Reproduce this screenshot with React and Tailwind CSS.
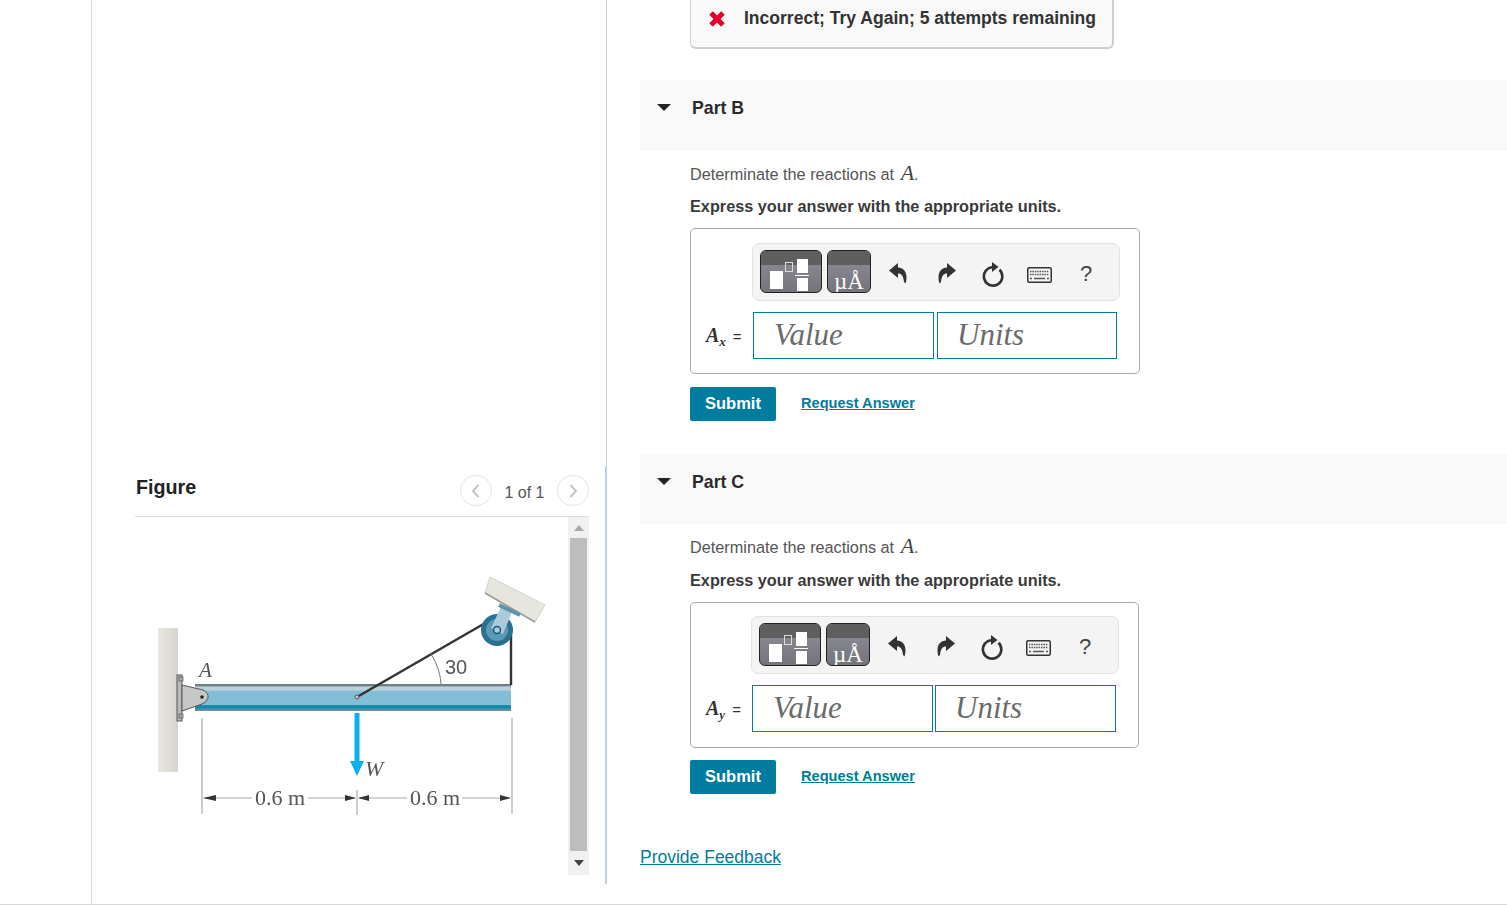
const SANS = "font-['Liberation_Sans',Arial,sans-serif]";

function Tri({ className = "" }) {
  return (
    <svg width="14" height="7" viewBox="0 0 14 7" className={className}>
      <path d="M0 0H14L7 7Z" fill="#222" />
    </svg>
  );
}

function TemplateBtn() {
  return (
    <div className="relative mt-[-1px] w-[62px] h-[43px] rounded-[6px] border border-[#222] overflow-hidden bg-gradient-to-b from-[#90909a] to-[#74747b] shrink-0">
      <div className="h-[14px] bg-[#5f5f5f]" />
      <div className="absolute left-[9px] top-[20px] w-[13px] h-[18px] bg-white" />
      <div className="absolute left-[24px] top-[11px] w-[8px] h-[10px] border border-[#ddd]" />
      <div className="absolute left-[36px] top-[8px] w-[11px] h-[14px] bg-white" />
      <div className="absolute left-[34px] top-[24px] w-[14px] h-[1px] bg-white" />
      <div className="absolute left-[36px] top-[27px] w-[11px] h-[13px] bg-white" />
    </div>
  );
}

function UnitBtn() {
  return (
    <div className="relative mt-[-1px] w-[44px] h-[43px] rounded-[6px] border border-[#222] overflow-hidden bg-gradient-to-b from-[#90909a] to-[#74747b] shrink-0 ml-[5px]">
      <div className="h-[14px] bg-[#5f5f5f]" />
      <span className="absolute left-[6px] bottom-[-4px] text-[23px] leading-[28px] text-white font-['Liberation_Serif',serif]">µÅ</span>
    </div>
  );
}

function Arrow({ flip }) {
  return (
    <svg width="18" height="22" viewBox="0 0 18 22" className={flip ? "-scale-x-100" : ""}>
      <path d="M9 1 L0 8.5 L9 16 L9 11.5 C12.5 11.5 14.5 14 15 20 L16.5 21.5 C19.5 12 15.5 5.5 9 5.5 Z" fill="#333" />
    </svg>
  );
}

function Reload() {
  return (
    <svg width="22" height="25" viewBox="0 0 22 25">
      <path d="M11 5.2 A9.2 9.2 0 1 0 17.5 7.8" fill="none" stroke="#333" strokeWidth="2.6" />
      <path d="M10 0 L16.5 5 L10 10 Z" fill="#333" />
    </svg>
  );
}

function Keyboard() {
  return (
    <svg width="25" height="16" viewBox="0 0 25 16">
      <rect x="0.75" y="0.75" width="23.5" height="14.5" rx="1.5" fill="#f4f4f4" stroke="#333" strokeWidth="1.5" />
      <path d="M3 4.5H22M3 7.5H22" stroke="#555" strokeWidth="1.6" strokeDasharray="1.5 0.9" />
      <path d="M3 11.5H5M7 11.5H18M20 11.5H22" stroke="#555" strokeWidth="1.6" />
    </svg>
  );
}

function Part({ title, sub, boxW, gap, toolbarLeft, inputW2, mt, headH, expressMt, toolbarTop, inputTop, submitMt }) {
  return (
    <section className={mt}>
      <div className="bg-[#f9f9f9] flex items-center pb-[14px] pl-[17px]" style={{ height: headH }}>
        <Tri className="mt-[-2px]" />
        <h3 className={`ml-[21px] text-[17.7px] font-bold text-[#2b2b2b] ${SANS}`}>{title}</h3>
      </div>
      <div className="pl-[50px]">
        <p className={`mt-[11px] h-[22px] leading-[22px] text-[16.25px] text-[#555] ${SANS}`}>
          Determinate the reactions at <i className="ml-[2px] font-['Liberation_Serif',serif] text-[22px] text-[#444]">A</i>.
        </p>
        <p className={`h-[22px] leading-[22px] text-[16.25px] font-bold text-[#3a3a3a] ${SANS}`} style={{ marginTop: expressMt }}>Express your answer with the appropriate units.</p>
        <div className="mt-[11px] h-[146px] border border-[#aaa] rounded-[5px] relative" style={{ width: boxW }}>
          <div className="absolute h-[58px] w-[368px] bg-[#f4f4f4] border border-[#e2e2e2] rounded-[7px] flex items-center pl-[7px]" style={{ left: toolbarLeft, top: toolbarTop }}>
            <TemplateBtn />
            <UnitBtn />
            <div className="ml-[18px] mt-[2px]"><Arrow /></div>
            <div className="ml-[31px] mt-[2px]"><Arrow flip /></div>
            <div className="ml-[26px] mt-[4px]"><Reload /></div>
            <div className="ml-[23px] mt-[6px]"><Keyboard /></div>
            <span className={`ml-[28px] mt-[2px] text-[22px] text-[#444] ${SANS}`}>?</span>
          </div>
          <div className="absolute left-[15px] flex items-center h-[47px]" style={{ top: inputTop }}>
            <span className={`w-[48px] pb-[2px] whitespace-nowrap text-[#333] text-[15px] ${SANS}`} style={{ marginRight: toolbarLeft - 62 }}>
              <i className="font-['Liberation_Serif',serif] text-[20px] font-bold text-[#333]">A</i>
              <i className="font-['Liberation_Serif',serif] text-[13px] font-bold relative top-[4px]">{sub}</i>
              <span className="ml-[7px]">=</span>
            </span>
            <div className="w-[181px] h-[47px] border border-[#007c9e] pl-[20px] flex items-center">
              <span className="font-['Liberation_Serif',serif] italic text-[31px] text-[#6b6b6b]">Value</span>
            </div>
            <div className="h-[47px] border border-[#007c9e] pl-[19px] flex items-center" style={{ marginLeft: gap, width: inputW2 }}>
              <span className="font-['Liberation_Serif',serif] italic text-[31px] text-[#6b6b6b]">Units</span>
            </div>
          </div>
        </div>
        <div className="flex items-center h-[34px]" style={{ marginTop: submitMt }}>
          <button className={`w-[86px] h-[34px] pb-[2px] bg-[#007c9e] rounded-[2px] text-white text-[16.5px] font-bold ${SANS}`}>Submit</button>
          <a className={`ml-[25px] text-[14.6px] font-bold underline text-[#007c9e] ${SANS}`}>Request Answer</a>
        </div>
      </div>
    </section>
  );
}

function Figure() {
  return (
    <svg width="433" height="358" viewBox="135 517 433 358" className="block blur-[0.4px]">
      <defs>
        <linearGradient id="beam" x1="0" y1="0" x2="0" y2="1">
          <stop offset="0" stopColor="#6f7f86" />
          <stop offset="0.08" stopColor="#6f7f86" />
          <stop offset="0.1" stopColor="#b9d2dc" />
          <stop offset="0.22" stopColor="#b9d2dc" />
          <stop offset="0.28" stopColor="#84bdd6" />
          <stop offset="0.76" stopColor="#84bdd6" />
          <stop offset="0.8" stopColor="#0e8cab" />
          <stop offset="0.9" stopColor="#0e8cab" />
          <stop offset="0.92" stopColor="#64909f" />
          <stop offset="1" stopColor="#64909f" />
        </linearGradient>
        <linearGradient id="wall" x1="0" y1="0" x2="1" y2="0">
          <stop offset="0" stopColor="#e8e7e0" />
          <stop offset="1" stopColor="#d6d5cd" />
        </linearGradient>
      </defs>
      <rect x="158" y="628" width="20" height="144" fill="url(#wall)" />
      <rect x="195" y="684" width="316" height="27" fill="url(#beam)" />
      <rect x="177" y="675" width="5" height="46" fill="#b9bbbb" stroke="#555" strokeWidth="1" />
      <rect x="179" y="677" width="4" height="4" fill="#aaa" stroke="#555" strokeWidth="0.7" />
      <rect x="179" y="714" width="4" height="4" fill="#aaa" stroke="#555" strokeWidth="0.7" />
      <path d="M182 685 L203 690 Q209 693 208 698 Q206 703 202 704 L182 711 Z" fill="#c6c8c8" stroke="#555" strokeWidth="1" />
      <circle cx="202" cy="697" r="1.8" fill="#222" />
      <text x="199" y="677" fontFamily="Liberation Serif" fontStyle="italic" fontSize="21" fill="#555">A</text>

      <path d="M357 697 L487 622" stroke="#333" strokeWidth="2.4" />
      <path d="M511 635 L511 685" stroke="#333" strokeWidth="2.4" />
      <circle cx="357" cy="697" r="2" fill="#ccc" stroke="#555" />
      <path d="M431 654 Q440 668 441 684" fill="none" stroke="#777" strokeWidth="1" />
      <text x="445" y="674" fontFamily="Liberation Sans" fontSize="20" fill="#555">30</text>

      <path d="M485 593 L490 577 L545 605 L535 622 Z" fill="#e6e5de" stroke="#d2d1c9" />
      <path d="M485 593 L535 622" stroke="#9a9a92" strokeWidth="1.5" />
      <circle cx="497" cy="630" r="16" fill="#2a7090" />
      <circle cx="497" cy="630" r="11" fill="#5b9ab5" />
      <path d="M501 607 L512 612 L503 634 L491 628 Z" fill="#a9cbdc" />
      <path d="M499 605 L520 615" stroke="#5d93ab" strokeWidth="4" />
      <circle cx="497" cy="630" r="3.5" fill="#a9cbdc" stroke="#1d5870" strokeWidth="1.5" />

      <path d="M357 713 V764" stroke="#0cb0ee" strokeWidth="5" />
      <path d="M350 761 H364 L357 776 Z" fill="#0cb0ee" />
      <text x="365" y="776" fontFamily="Liberation Serif" fontStyle="italic" fontSize="22" fill="#555">W</text>

      <path d="M202 718 V814 M357 790 V815 M512 718 V814" stroke="#bdbdbd" strokeWidth="1.5" />
      <path d="M204 798 H252 M308 798 H355 M359 798 H407 M462 798 H510" stroke="#aaa" strokeWidth="1.2" />
      <path d="M203 798 L216 795 V801 Z M356 798 L345 795 V801 Z M358 798 L369 795 V801 Z M511 798 L500 795 V801 Z" fill="#333" />
      <text x="255" y="805" fontFamily="Liberation Serif" fontSize="22" fill="#555">0.6 m</text>
      <text x="410" y="805" fontFamily="Liberation Serif" fontSize="22" fill="#555">0.6 m</text>
    </svg>
  );
}

function Circle({ d }) {
  return (
    <div className="w-[32px] h-[31px] rounded-full border border-[#e4e4e4] flex items-center justify-center">
      <svg width="10" height="16" viewBox="0 0 10 16"><path d={d} fill="none" stroke="#c4c4c4" strokeWidth="2" /></svg>
    </div>
  );
}

export default function App() {
  return (
    <div className="w-[1507px] h-[905px] overflow-hidden bg-white flex border-b border-[#d9d9d9]">
      <div className="w-[92px] h-full border-r border-[#d9d9d9] shrink-0" />
      <aside className="w-[515px] h-[884px] shrink-0 border-r border-[#c3d5e5] flex flex-col justify-end">
        <div className="h-[417px] border-r border-[#b9cfe2] pl-[43px] pr-[16px]">
          <div className="h-[50px] border-b border-[#dcdcdc] relative flex items-center">
            <h2 className={`text-[19.7px] font-bold text-[#222] mt-[-7px] ml-[1px] ${SANS}`}>Figure</h2>
            <div className="ml-auto mt-[-2px] flex items-center">
              <Circle d="M7.5 2 L2 8 L7.5 14" />
              <span className={`w-[65px] text-center text-[16px] text-[#555] mt-[5px] ${SANS}`}>1 of 1</span>
              <Circle d="M2.5 2 L8 8 L2.5 14" />
            </div>
          </div>
          <div className="flex">
            <Figure />
            <div className="w-[21px] h-[358px] bg-[#f1f1f1] flex flex-col items-center">
              <svg width="10" height="6" viewBox="0 0 10 6" className="mt-[8px]"><path d="M0 6H10L5 0Z" fill="#aaa" /></svg>
              <div className="w-[17px] h-[313px] bg-[#bdbdbd] mt-[7px]" />
              <svg width="10" height="6" viewBox="0 0 10 6" className="mt-[9px]"><path d="M0 0H10L5 6Z" fill="#444" /></svg>
            </div>
          </div>
        </div>
      </aside>
      <main className="flex-1 pl-[33px] min-w-0">
        <div className="ml-[50px] w-[424px] h-[49px] bg-[#f9f9f9] border border-t-0 border-[#cfcfcf] border-b-2 border-r-2 rounded-b-[6px] flex items-center pl-[17px] pb-[10px]">
          <svg width="18" height="18" viewBox="0 0 18 18"><path d="M3 3 L15 15 M15 3 L3 15" stroke="#e4002b" strokeWidth="5" /></svg>
          <span className={`ml-[18px] text-[17.55px] font-bold text-[#333] whitespace-nowrap ${SANS}`}>Incorrect; Try Again; 5 attempts remaining</span>
        </div>
        <Part title="Part B" sub="x" boxW={450} gap={3} toolbarLeft={61} inputW2={180} mt="mt-[31px]" headH={71} expressMt={11} toolbarTop={14} inputTop={83} submitMt={13} />
        <Part title="Part C" sub="y" boxW={449} gap={2} toolbarLeft={60} inputW2={181} mt="mt-[33px]" headH={70} expressMt={12} toolbarTop={13} inputTop={82} submitMt={12} />
        <a className={`block mt-[50px] text-[17.5px] underline text-[#007c9e] ${SANS}`}>Provide Feedback</a>
      </main>
    </div>
  );
}
